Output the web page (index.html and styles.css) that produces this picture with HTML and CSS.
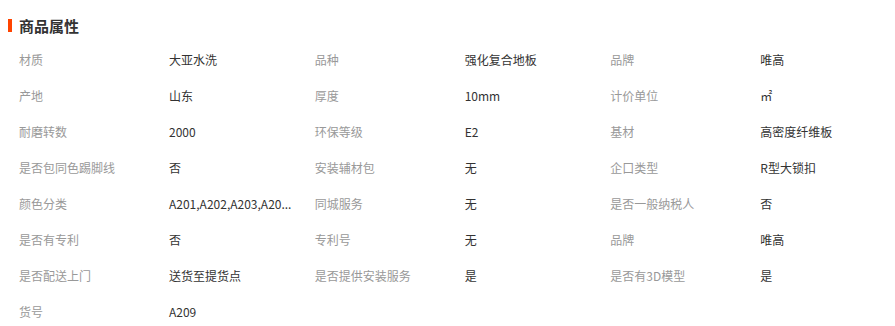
FILE: index.html
```html
<!DOCTYPE html>
<html lang="zh-CN">
<head>
<meta charset="utf-8">
<title>商品属性</title>
<link rel="stylesheet" href="styles.css">
</head>
<body>
<div class="panel">
  <h2 class="title"><span class="bar"></span>商品属性</h2>
  <ul class="attrs">
    <li class="attr"><span class="label">材质</span><span class="value">大亚水洗</span></li>
    <li class="attr"><span class="label">品种</span><span class="value">强化复合地板</span></li>
    <li class="attr"><span class="label">品牌</span><span class="value">唯高</span></li>
    <li class="attr"><span class="label">产地</span><span class="value">山东</span></li>
    <li class="attr"><span class="label">厚度</span><span class="value">10mm</span></li>
    <li class="attr"><span class="label">计价单位</span><span class="value">㎡</span></li>
    <li class="attr"><span class="label">耐磨转数</span><span class="value">2000</span></li>
    <li class="attr"><span class="label">环保等级</span><span class="value">E2</span></li>
    <li class="attr"><span class="label">基材</span><span class="value">高密度纤维板</span></li>
    <li class="attr"><span class="label">是否包同色踢脚线</span><span class="value">否</span></li>
    <li class="attr"><span class="label">安装辅材包</span><span class="value">无</span></li>
    <li class="attr"><span class="label">企口类型</span><span class="value">R型大锁扣</span></li>
    <li class="attr"><span class="label">颜色分类</span><span class="value">A201,A202,A203,A20...</span></li>
    <li class="attr"><span class="label">同城服务</span><span class="value">无</span></li>
    <li class="attr"><span class="label">是否一般纳税人</span><span class="value">否</span></li>
    <li class="attr"><span class="label">是否有专利</span><span class="value">否</span></li>
    <li class="attr"><span class="label">专利号</span><span class="value">无</span></li>
    <li class="attr"><span class="label">品牌</span><span class="value">唯高</span></li>
    <li class="attr"><span class="label">是否配送上门</span><span class="value">送货至提货点</span></li>
    <li class="attr"><span class="label">是否提供安装服务</span><span class="value">是</span></li>
    <li class="attr"><span class="label">是否有3D模型</span><span class="value">是</span></li>
    <li class="attr"><span class="label">货号</span><span class="value">A209</span></li>
  </ul>
</div>
</body>
</html>
```

FILE: styles.css
```css
html, body {
  margin: 0;
  padding: 0;
  background: #fff;
}
body {
  font-family: "Noto Sans CJK SC", "Liberation Sans", sans-serif;
  font-size: 12px;
  color: #333;
}
.panel {
  padding: 14px 0 0 8px;
  width: 887px;
}
.title {
  margin: 0;
  display: flex;
  align-items: center;
  height: 22px;
  font-size: 15px;
  font-weight: bold;
  color: #333;
}
.bar {
  width: 4px;
  height: 13px;
  background: #ff4400;
  margin-right: 7px;
}
.attrs {
  list-style: none;
  margin: 5px 0 0 0;
  padding: 0;
  display: grid;
  grid-template-columns: repeat(3, 1fr);
}
.attr {
  display: flex;
  height: 36px;
  align-items: center;
  min-width: 0;
}
.label {
  width: 140px;
  flex: none;
  padding-left: 11px;
  color: #999;
  white-space: nowrap;
}
.value {
  flex: 1;
  min-width: 0;
  padding: 0 4px 0 10px;
  white-space: nowrap;
  overflow: hidden;
  color: #333;
}
```
